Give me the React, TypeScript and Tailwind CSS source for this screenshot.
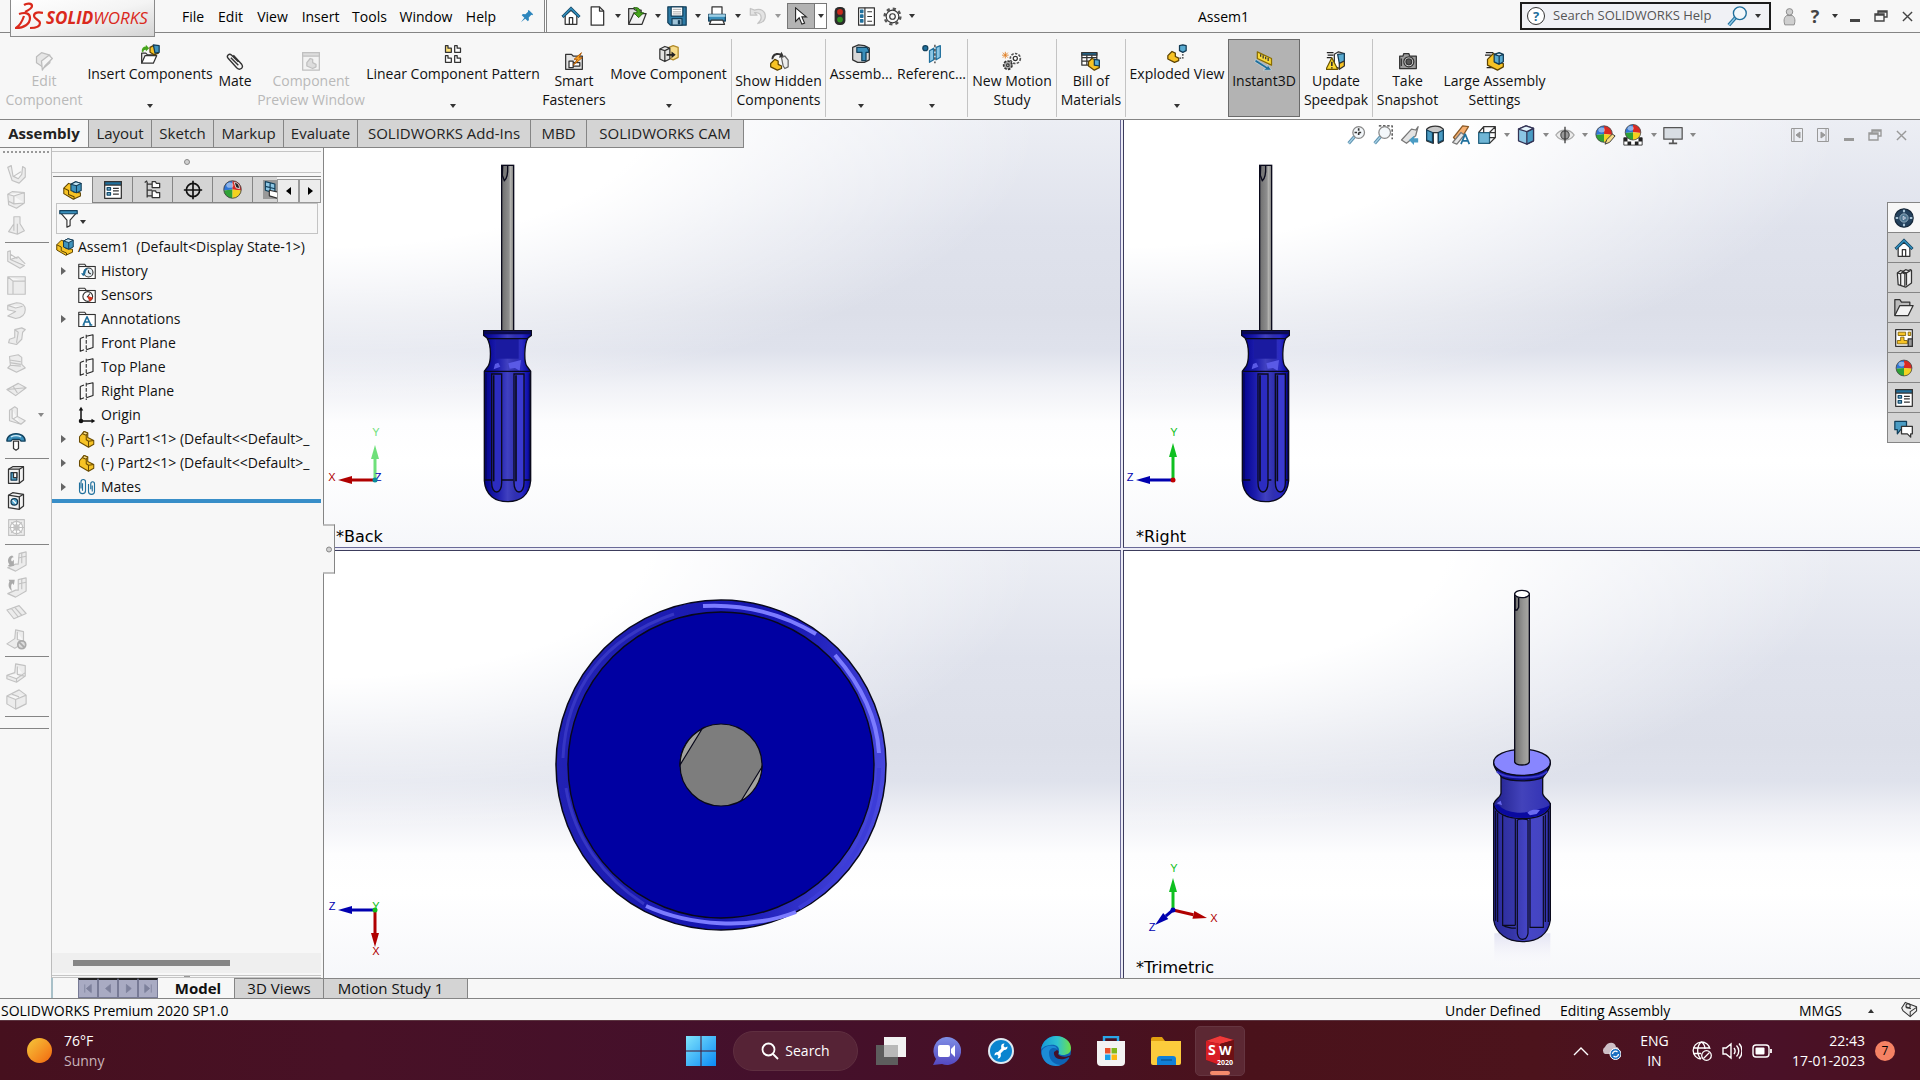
import React from "react";

type Kids = { children?: React.ReactNode };

const OUT = "#333";
const BLUE = "#1f6f9c";
const LBLUE = "#8cc6e4";
const YEL = "#f7c325";

function Svg({ children, size = "size-[20px]", box = "0 0 24 24" }: Kids & { size?: string; box?: string }) {
  return (
    <svg viewBox={box} className={"shrink-0 " + size} fill="none" stroke={OUT} strokeWidth="1.5" strokeLinejoin="round" aria-hidden="true">
      {children}
    </svg>
  );
}

/* ---------- shared glyph shapes ---------- */
const PartShape = () => (
  <g stroke="#6b4c00" strokeWidth="1.4">
    <path d="M2 9l6-7 5 2v6l8 4v5l-7 4L2 16z" fill={YEL} />
    <path d="M8 2l5 2-2 3-5-2z" fill="#fbe08a" />
    <path d="M11 7v6l3 2 7-1M14 15v8" />
  </g>
);
const AsmShape = () => (
  <g strokeWidth="1.3">
    <path d="M1 9l6-6 6 2v9l9 1v4l-9 4L1 16z" fill={YEL} stroke="#5d4300" />
    <path d="M1 9l6 3v5l7 3v3" stroke="#5d4300" />
    <path d="M10 4l6-3 7 2v9l-6 3-7-3z" fill="#3f93bd" stroke="#123b55" />
    <path d="M10 4l7 2 6-3-7-2z" fill="#c4e6f5" stroke="#123b55" />
    <path d="M17 6v9" stroke="#123b55" />
  </g>
);
const ListShape = () => (
  <g>
    <rect x="2" y="2" width="20" height="20" fill="#fff" />
    <rect x="2" y="2" width="20" height="4" fill={BLUE} />
    <path d="M5 9h4v3H5zM5 15h4v3H5z" fill={LBLUE} stroke="#124a6b" />
    <path d="M12 10h7M12 13h7M12 17h7" />
  </g>
);
const HouseShape = () => (
  <g>
    <path d="M5 11v11h14V11l-7-6z" fill="#fff" />
    <path d="M10 22v-8h4v8" />
    <path d="M1 12L12 1l11 11-2 2-9-9-9 9z" fill="#2c86b3" stroke="#103d5a" strokeWidth="1" />
  </g>
);
const BallShape = ({ x = 12, y = 12, r = 9 }: { x?: number; y?: number; r?: number }) => (
  <g stroke="none" transform={`translate(${x} ${y}) scale(${r / 10})`}>
    <path d="M0 0V-10A10 10 0 0 0-10 1z" fill="#3076d6" />
    <path d="M0 0V-10A10 10 0 0 1 10 1z" fill="#d92a23" />
    <path d="M0 0L-10 1A10 10 0 0 0 0 10z" fill="#2fa136" />
    <path d="M0 0L10 1A10 10 0 0 1 0 10z" fill="#f3d21f" />
    <ellipse cx="-3" cy="-5" rx="4" ry="3" fill="#fff" opacity=".45" />
    <circle r="10" fill="none" stroke="#444" strokeWidth="1" />
  </g>
);
const Magnify = ({ soft = false }: { soft?: boolean }) => (
  <g>
    <path d="M9 14l-7 8" stroke={soft ? "#5f93b0" : BLUE} strokeWidth="4" />
    <path d="M9 14l-7 8" stroke={soft ? "#a8d2e6" : "#8cc6e4"} strokeWidth="1.6" />
    <circle cx="14" cy="9" r="7" fill="#f3f7fa" stroke={soft ? "#888" : BLUE} />
  </g>
);

const Part = ({ size }: { size?: string }) => <Svg size={size}><PartShape /></Svg>;
const Asm = ({ size }: { size?: string }) => <Svg size={size}><AsmShape /></Svg>;
const ListIcon = ({ size }: { size?: string }) => <Svg size={size}><ListShape /></Svg>;
const House = ({ size }: { size?: string }) => <Svg size={size}><HouseShape /></Svg>;

const Down = ({ color = "text-[#333]" }: { color?: string }) => (
  <svg viewBox="0 0 6 4" className={"h-[4px] w-[6px] shrink-0 " + color} fill="currentColor" aria-hidden="true">
    <path d="M0 0h6L3 4z" />
  </svg>
);

/* ---------- title bar ---------- */
function Logo() {
  return (
    <div className="relative z-20 ml-[10px] flex h-[37px] w-[145px] items-center gap-[3px] self-start border border-t-0 border-[#8a8a8a] bg-gradient-to-br from-white via-[#f4f4f4] to-[#d4d4d4] pl-[4px]">
      <svg viewBox="0 0 28 28" className="mb-[4px] h-[28px] w-[28px] shrink-0" fill="none" stroke="#da291c" strokeWidth="2.2" aria-hidden="true">
        <path d="M9 3c3-2 8-2 8 1 0 2-3 4-7 6" />
        <path d="M4 12c6-2 11-1 11 4 0 6-6 10-14 10 3-2 6-6 8-12" />
        <path d="M28 11c-4-1-9-1-9 3 0 3 6 4 6 7 0 4-5 5-10 5" />
      </svg>
      <span className="font-['Open_Sans',sans-serif] text-[17px] leading-5 text-[#da291c] italic">
        <b>SOLID</b>WORKS
      </span>
    </div>
  );
}

const menus: [string, string][] = [
  ["File", "w-[38px]"], ["Edit", "w-[37px]"], ["View", "w-[47px]"], ["Insert", "w-[49px]"],
  ["Tools", "w-[49px]"], ["Window", "w-[64px]"], ["Help", "w-[46px]"],
];

function QuickTool({ label, arrow = true, muted = false, children }: Kids & { label: string; arrow?: boolean; muted?: boolean }) {
  return (
    <button aria-label={label} className={"flex h-[26px] items-center " + (arrow ? "w-[40px] gap-[8px]" : "w-[26px]")}>
      {children}
      {arrow && <Down color={muted ? "text-[#999]" : "text-[#333]"} />}
    </button>
  );
}

function TitleBar() {
  return (
    <header className="flex h-[33px] shrink-0 items-center border-b border-[#858585] bg-[#f7f7f7] text-[14px] text-black">
      <Logo />
      <nav className="ml-[19px] flex" aria-label="Main menu">
        {menus.map(([m, w]) => (
          <button key={m} className={w + " text-center"}>{m}</button>
        ))}
      </nav>
      <button aria-label="Pin menu" className="ml-[16px]">
        <svg viewBox="0 0 16 16" className="size-[14px]" fill="#2d86bd" aria-hidden="true">
          <path d="M10 1l5 5-1 1-1-.3-3 3 .2 3-1.2 1.2L6 11 1 15l4-5-3-3 1.200-1.200 3 .2 3-3L9 2z" />
        </svg>
      </button>
      <div className="ml-[10px] h-full w-[3px] border-x border-[#858585] bg-white" />
      <div className="ml-[14px] flex flex-1 items-center">
        <QuickTool label="Home" arrow={false}><House /></QuickTool>
        <QuickTool label="New"><Svg><path d="M5 1h10l5 5v17H5z" fill="#fff" /><path d="M15 1v5h5" /></Svg></QuickTool>
        <QuickTool label="Open">
          <Svg><path d="M2 22V3h6l2 2h7v4" fill="#ddd" /><path d="M2 22L8 9h15l-5 13z" fill="#f3f3f3" /><path d="M8 2c6-1 8 2 8 6h4l-6 6-6-6h4c0-3-1-5-4-6z" fill="#46a51c" stroke="#1f5d06" strokeWidth="1" /></Svg>
        </QuickTool>
        <QuickTool label="Save">
          <Svg><path d="M1 1h22v22H4l-3-3z" fill="#2c7ba6" stroke="#143f5a" /><rect x="5" y="1" width="14" height="11" fill="#fff" stroke="#143f5a" /><path d="M7 4h10M7 7h10M7 9.500h10" stroke="#999" strokeWidth="1" /><rect x="6" y="15" width="12" height="8" fill="#9fc4d8" stroke="#143f5a" /><rect x="13" y="17" width="3" height="5" fill="#143f5a" stroke="none" /></Svg>
        </QuickTool>
        <QuickTool label="Print">
          <Svg><path d="M6 10V1h12v9" fill="#fff" /><path d="M2 10h20v8H2z" fill="#3a8fbb" stroke="#143f5a" /><path d="M5 17h14l2 5H3z" fill="#fff" /><path d="M2 10h20v3H2z" fill="#9fd0e6" stroke="none" /></Svg>
        </QuickTool>
        <QuickTool label="Undo" muted>
          <Svg><path d="M4 3v8h8l-3-3c6-1 8 3 8 6s-2 5-4 7c6-1 9-4 9-9s-5-10-13-7z" fill="#e3e3e3" stroke="#c4c4c4" /></Svg>
        </QuickTool>
        <button aria-label="Select" className="flex h-[26px] w-[40px] items-center border border-[#777] bg-white">
          <span className="flex h-full w-[27px] items-center justify-center border-r border-[#777] bg-[#b3b3b3]">
            <svg viewBox="0 0 14 20" className="h-[18px] w-[14px]" aria-hidden="true"><path d="M1 1v15l4-4 3 7 3-1-3-7h5z" fill="#fff" stroke="#222" strokeWidth="1.200" /></svg>
          </span>
          <span className="flex flex-1 justify-center"><Down /></span>
        </button>
        <button aria-label="Rebuild" className="ml-[7px] w-[23px]">
          <svg viewBox="0 0 12 20" className="h-[18px] w-[12px]" aria-hidden="true"><rect width="12" height="20" rx="5" fill="#2b2b2b" /><circle cx="6" cy="5.500" r="3.200" fill="#c92a1c" /><circle cx="6" cy="14" r="3.200" fill="#2f8f24" /></svg>
        </button>
        <button aria-label="File properties" className="w-[26px]"><Svg size="size-[19px]"><rect x="2" y="1" width="20" height="22" fill="#fff" /><path d="M10 1v22" /><path d="M4.500 4h3v3h-3zM4.500 10h3v3h-3zM4.500 16h3v3h-3z" fill={BLUE} stroke={BLUE} /><path d="M13 6h6M13 12h6M13 18h6" /></Svg></button>
        <button aria-label="Options" className="flex items-center gap-[7px]">
          <Svg size="size-[19px]"><circle cx="12" cy="12" r="10" strokeDasharray="4 3.850" strokeWidth="3" stroke="#555" /><circle cx="12" cy="12" r="8" fill="#f7f7f7" strokeWidth="1.400" /><circle cx="12" cy="12" r="3.500" /></Svg>
          <Down />
        </button>
        <h1 className="ml-[283px] text-[14px]">Assem1</h1>
      </div>
      <div className="flex h-[28px] w-[251px] items-center border-2 border-[#1c1c1c] bg-[#f0f1f5] px-[5px]">
        <span className="flex size-[18px] shrink-0 items-center justify-center rounded-full border border-[#333] bg-white text-[13px] leading-none font-bold text-[#1f6f9c]">?</span>
        <input aria-label="Search SOLIDWORKS Help" placeholder="Search SOLIDWORKS Help" className="ml-[8px] w-[174px] min-w-0 bg-transparent text-[13px] outline-none placeholder:text-[#555]" />
        <Svg size="size-[22px]"><Magnify /></Svg>
        <span className="ml-[6px]"><Down /></span>
      </div>
      <div className="flex items-center text-[#444]">
        <button aria-label="Account" className="flex w-[36px] justify-center">
          <svg viewBox="0 0 14 20" className="h-[19px] w-[13px]" fill="#cfcfcf" stroke="#888" aria-hidden="true"><path d="M2 19c-2-6 0-9 2-10h6c2 1 4 4 2 10z" /><circle cx="7" cy="5" r="3.500" /></svg>
        </button>
        <button aria-label="Help" className="flex w-[35px] items-center justify-center gap-[13px] text-[18px] leading-none font-bold">?<Down /></button>
        <button aria-label="Minimize" className="flex w-[26px] justify-center pt-[8px]"><span className="h-[3px] w-[10px] bg-[#444]" /></button>
        <button aria-label="Restore" className="flex w-[26px] justify-center"><RestoreGlyph /></button>
        <button aria-label="Close" className="flex w-[26px] justify-center"><CloseGlyph /></button>
      </div>
    </header>
  );
}

const RestoreGlyph = () => (
  <svg viewBox="0 0 14 12" className="h-[12px] w-[14px]" fill="none" stroke="currentColor" strokeWidth="1.400" aria-hidden="true"><path d="M4 4V1h9v6h-3M1 4h9v7H1zM4 2h9M1 5h9" /></svg>
);
const CloseGlyph = () => (
  <svg viewBox="0 0 12 12" className="size-[11px]" fill="none" stroke="currentColor" strokeWidth="1.500" aria-hidden="true"><path d="M1 1l10 10M11 1L1 11" /></svg>
);

/* ---------- ribbon ---------- */
type RibbonItem = {
  lines: string[]; w: string; icon: React.ReactNode; drop?: boolean; sep?: boolean; off?: boolean; on?: boolean;
};

const ribbon: RibbonItem[] = [
  { lines: ["Edit", "Component"], w: "w-[88px]", off: true, icon: <Svg><g stroke="#bdbdbd"><path d="M3 7l6-5 10 3v9l-7 6-9-6z" fill="#e6e6e6" /><path d="M9 12l9-7 4 4-9 9-3 5z" fill="#f5f5f5" /></g></Svg> },
  { lines: ["Insert Components"], w: "w-[124px]", drop: true, icon: <Svg><path d="M2 23V11h5l2 2h9v3" fill="#eee" /><path d="M2 23l4-9h14l-4 9z" fill="#fff" /><path d="M2 9c0-4 2-6 5-6V1l4 4-4 4V7C5 7 4 8 4 10z" fill="#46a51c" stroke="none" /><path d="M12 4l4-2 6 2v7l-5 2-5-3z" fill={YEL} stroke="#5d4300" /><path d="M16 1l7 1v8l-5 1z" fill="#3f93bd" stroke="#123b55" /></Svg> },
  { lines: ["Mate"], w: "w-[46px]", icon: <Svg><path d="M16 13L8 5C5 2 1 6 4 9l10 11c4 4 9 0 6-4L10 5M16 17L7 8" strokeWidth="1.700" /></Svg> },
  { lines: ["Component", "Preview Window"], w: "w-[106px]", off: true, icon: <Svg><g stroke="#c0c0c0"><rect x="2" y="2" width="20" height="21" fill="#f3f3f3" /><path d="M2 2h20v4H2z" fill="#ddd" /><path d="M7 14l4-5 3 1v4l4 2v3l-4 2-7-3z" fill="#ddd" /></g></Svg> },
  { lines: ["Linear Component Pattern"], w: "w-[178px]", drop: true, icon: <Svg><path d="M3 2h3v3h4v5H3z" fill="#ffe27a" /><path d="M14 2h3v3h4v5h-7zM3 14h3v3h4v5H3zM14 14h3v3h4v5h-7z" fill="#fff" /></Svg> },
  { lines: ["Smart", "Fasteners"], w: "w-[64px]", icon: <Svg><path d="M2 22V4h7l2 2h11v16z" fill="#e5e5e5" /><path d="M6 12h5v8H6zM11 14h8v4h-8z" fill="#fff" /><path d="M21 2l-9 8h4l-5 7 11-9h-4z" fill="#f7a325" stroke="#a95200" strokeWidth="1" /></Svg> },
  { lines: ["Move Component"], w: "w-[126px]", drop: true, sep: true, icon: <Svg><path d="M12 4l5-2 6 2v12l-6 3-5-2z" fill="#f7dc8a" stroke="#b08a2a" /><path d="M1 6l6-3 6 2v13l-6 3-6-3zM1 6l6 2 6-3M7 8v13" fill="#e2e2e2" /><path d="M9 12h6V9l5 4-5 4v-3H9z" fill="#222" stroke="none" /></Svg> },
  { lines: ["Show Hidden", "Components"], w: "w-[94px]", sep: true, icon: <Svg><path d="M3 10c0-7 6-9 11-7l1-2 3 6-6 1 1-3C9 4 6 5 5 10z" fill="#333" stroke="none" /><path d="M2 15l5-5 4 2v4l4 2v3l-5 2-8-4z" fill={YEL} stroke="#5d4300" /><path d="M15 8l4-2 4 5v8l-4 2-2-3z" fill="#eee" stroke="#666" /></Svg> },
  { lines: ["Assemb..."], w: "w-[70px]", drop: true, icon: <Svg><path d="M2 4l7-3 7 1 6 3v14l-6 3H8l-6-3z" fill="#d8d8d8" /><path d="M7 4h12l2 3v3h-3v10h-5V10H7z" fill="#3a8fbb" stroke="#12405c" /></Svg> },
  { lines: ["Referenc..."], w: "w-[72px]", drop: true, sep: true, icon: <Svg><circle cx="4" cy="5" r="3" fill={BLUE} stroke="#12405c" /><path d="M9 8l5-3v14l-5 3zM17 4l5-2v14l-5 3z" fill={LBLUE} stroke={BLUE} /><path d="M15.500 1v22" strokeDasharray="3 2" /></Svg> },
  { lines: ["New Motion", "Study"], w: "w-[89px]", sep: true, icon: <Svg><circle cx="16" cy="9" r="6" fill="#fff" strokeDasharray="3 1.500" strokeWidth="2" stroke="#555" /><circle cx="16" cy="9" r="2.500" /><circle cx="7" cy="17" r="5" fill="#aaa" strokeDasharray="3 1.500" strokeWidth="2" /><circle cx="7" cy="17" r="1.500" fill="#fff" /><path d="M4 1v8M0 5h8M1 2l6 6M7 2L1 8" stroke="#e07b1c" strokeWidth="1" /></Svg> },
  { lines: ["Bill of", "Materials"], w: "w-[69px]", sep: true, icon: <Svg><path d="M1 2h18v15H1zM1 8h18M1 12h18M7 5v12M13 5v12" fill="#fff" /><path d="M1 2h18v3H1z" fill={BLUE} /><path d="M9 13l4-4 9 3v8l-6 3-7-5z" fill={YEL} stroke="#5d4300" /><path d="M16 10l6 1v7l-6-1z" fill="#59abd1" stroke="#123b55" /></Svg> },
  { lines: ["Exploded View"], w: "w-[102px]", drop: true, icon: <Svg><path d="M1 14l5-5 4 2v4l4 2v3l-5 2-8-4z" fill={YEL} stroke="#5d4300" /><path d="M15 2l4-1 4 1v6l-4 2-4-2z" fill="#59abd1" stroke="#123b55" /><path d="M19 12v5h-5" strokeDasharray="2 1.500" /></Svg> },
  { lines: ["Instant3D"], w: "w-[72px]", on: true, icon: <Svg><path d="M4 1l17 8v8L4 9z" fill="#f9d93b" stroke="#8a6d00" /><path d="M8 4v3M11 5v4M14 7v3M17 8v4" stroke="#333" /><path d="M2 10l14 9v-3l5 7H11l3-2L1 13z" fill={BLUE} stroke="#fff" strokeWidth=".5" /></Svg> },
  { lines: ["Update", "Speedpak"], w: "w-[73px]", sep: true, icon: <Svg><path d="M1 2h8M2 5h7M1 8h6" stroke="#222" /><path d="M10 4l5-3 7 2v14l-6 4-6-3z" fill="#fff" /><path d="M14 4l8-1v9l-6 3z" fill="#59abd1" stroke="#123b55" /><path d="M16 15l6-3v6l-6 4z" fill={YEL} /><path d="M7 8l7 14H0z" fill="#fbd92f" stroke="#6b5500" /><path d="M7 13v5M7 19.500V21" strokeWidth="2" /></Svg> },
  { lines: ["Take", "Snapshot"], w: "w-[69px]", icon: <Svg><path d="M2 6h4l1-3h6l1 3h8v15H2z" fill="#9b9b9b" /><circle cx="13" cy="13" r="6" fill="#e8e8e8" /><circle cx="13" cy="13" r="3.500" fill="#555" /><path d="M4 9v9" /></Svg> },
  { lines: ["Large Assembly", "Settings"], w: "w-[105px]", icon: <Svg><path d="M1 2h9M0 5h7M2 20h8" stroke="#222" /><path d="M3 10l7-7 4 2v9l8 1v4l-7 4-12-6z" fill={YEL} stroke="#5d4300" /><path d="M11 4l6-2 5 2v9l-5 3-6-3zM11 4l6 2 5-2M17 6v10" fill="#59abd1" stroke="#123b55" /></Svg> },
];

function Ribbon() {
  return (
    <div className="flex h-[87px] shrink-0 border-b border-[#858585] bg-[#f7f7f7] pt-[6px] pb-[2px] text-[14px]" role="toolbar" aria-label="Assembly commands">
      {ribbon.map((r) => (
        <button
          key={r.lines.join(" ")}
          className={
            "relative flex shrink-0 flex-col items-center leading-[19px] whitespace-nowrap " + r.w +
            (r.drop ? " pt-[5px]" : r.on ? " pt-[11px]" : " pt-[12px]") +
            (r.sep ? " border-r border-[#c4c4c4]" : "") +
            (r.off ? " text-[#b9b9b9]" : " text-[#111]") +
            (r.on ? " border border-[#6b6b6b] bg-[#b3b3b3]" : "")
          }
        >
          {r.icon}
          {r.lines.map((l) => <span key={l}>{l}</span>)}
          {r.drop && <span className="absolute bottom-[9px] left-1/2 -translate-x-1/2"><Down /></span>}
        </button>
      ))}
    </div>
  );
}

const tabs: [string, string][] = [
  ["Assembly", "w-[89px]"], ["Layout", "w-[63px]"], ["Sketch", "w-[62px]"], ["Markup", "w-[70px]"],
  ["Evaluate", "w-[74px]"], ["SOLIDWORKS Add-Ins", "w-[173px]"], ["MBD", "w-[56px]"], ["SOLIDWORKS CAM", "w-[157px]"],
];

function CommandTabs() {
  return (
    <div className="absolute top-0 left-0 z-10 flex h-[28px] border-b border-[#858585] text-[15px]" role="tablist">
      {tabs.map(([t, w], i) => (
        <button key={t} role="tab" aria-selected={i === 0} className={w + (i === 0 ? " bg-[#f7f7f7] font-bold" : " bg-[#d4d4d4]") + " border-r border-[#858585] whitespace-nowrap text-[#222]"}>
          {t}
        </button>
      ))}
    </div>
  );
}

/* ---------- left mate toolbar ---------- */
const Ghost = ({ children }: Kids) => (
  <svg viewBox="0 0 24 24" className="size-[21px]" fill="#ececec" stroke="#c2c2c2" strokeWidth="1.300" strokeLinejoin="round" aria-hidden="true">{children}</svg>
);

const sideGroups: [string, React.ReactNode][][] = [
  [
    ["Base flange", <Ghost><path d="M2 5l4-2 2 12 6 3 4-5 1-9 3 2v10l-7 7-8-3zM9 15l8-5" /></Ghost>],
    ["Edge flange", <Ghost><path d="M2 6l5-3 14 1v12l-9 6-9-4zM2 6l7 2 12-4M9 8v9l12-1M3 14l6 3" /></Ghost>],
    ["Loft", <Ghost><path d="M9 2h7v8l5 8-8 4-10-3 6-9zM9 2v16M13 10v12" /></Ghost>],
  ],
  [
    ["Miter flange", <Ghost><path d="M2 3l3-1v10l16 7-5 3L2 14zM5 12l9-3 8 8M5 6l8 5" /></Ghost>],
    ["Hem", <Ghost><path d="M2 2h20v20H2zM2 2l6 5h14M8 7v15" /></Ghost>],
    ["Jog", <Ghost><path d="M2 5l10-3c7 0 10 3 10 8s-4 9-11 10L2 17l9-5-9-2zM2 5l9 3 8-2" /></Ghost>],
    ["Sketched bend", <Ghost><path d="M10 3l8-2 4 2-3 3-1 8-6 6-9-2 1-4 6-2zM10 3l4 3-2 12" /></Ghost>],
    ["Cross break", <Ghost><path d="M4 4l10-2 4 3v8l4 4-10 5L2 17l3-3zM4 8l13 2M5 14l12 1M4 11l13 2" /></Ghost>],
    ["Corner", <Ghost><path d="M1 12l13-7 9 5-12 9zM1 12l22-2M8 8l5 8" /></Ghost>],
    ["Gusset", <Ghost><path d="M4 6l6-4 3 2v9l9 5-5 4-13-4zM7 5v10l10 7M13 13l-5 3" /></Ghost>],
    ["Forming tool", <Svg><path d="M1 12c0-6 6-9 11-9s11 3 11 9h-5l-2-2H8l-2 2z" fill="#3a8fbb" stroke="#12405c" /><path d="M6 7c4-2 8-2 12 0" stroke="#cfeaf6" /><path d="M9 12h6v9l-3 2-3-2z" fill="#fff" /></Svg>],
  ],
  [
    ["Extruded cut", <Svg><path d="M3 5l5-3h13v16l-5 4H3z" fill="#f3f3f3" /><path d="M3 5h13v17M16 5l5-3" /><path d="M6 9h7v9H6z" fill="#59abd1" stroke="#123b55" /><path d="M9 9h4v6H9z" fill="#fff" /></Svg>],
    ["Simple hole", <Svg><path d="M3 5l5-3 13 2v14l-5 4-13-2z" fill="#f3f3f3" /><path d="M3 5l13 2v15M16 7l5-3" /><circle cx="10" cy="13" r="4" fill="#59abd1" stroke="#123b55" /><path d="M8 11l4 4" stroke="#fff" /></Svg>],
    ["Vent", <Ghost><path d="M3 3h18v18H3z" /><circle cx="12" cy="12" r="7" fill="#fff" /><circle cx="12" cy="12" r="3" /><path d="M12 3v18M3 12h18M6 6l12 12M18 6L6 18" /></Ghost>],
  ],
  [
    ["Unfold", <Ghost><path d="M15 3l8-2v15l-12 7-9-4 9-4h3z" /><path d="M18 2v12M14 8l9-2" /><path d="M7 5c-5 1-6 7-3 10l-2 2h7v-7l-2 2c-2-2-1-5 2-5z" fill="#aaa" stroke="none" /></Ghost>],
    ["Fold", <Ghost><path d="M14 3l9-2v15l-12 7-9-4 9-4h3z" /><path d="M18 2v12M14 8l9-2" /><path d="M3 3l7 0-1 6-2-2c-2 3-1 6 0 9-4-3-5-7-3-11z" fill="#aaa" stroke="none" /></Ghost>],
    ["Flatten", <Ghost><path d="M1 8l14-5 8 9-14 6zM6 6l8 10M10 5l8 9" /></Ghost>],
    ["No bends", <Ghost><path d="M11 1l9 2v10l-3 5-7 4-9-5 9-6zM13 3v9l7 2" /><circle cx="18" cy="18" r="4.500" fill="#ddd" stroke="#aaa" strokeWidth="2" /><path d="M15 15l6 6" stroke="#aaa" strokeWidth="2" /></Ghost>],
  ],
  [
    ["Rip", <Ghost><path d="M11 1l11 2v12l-10 7-11-4v-4l9-3zM13 4v9l8 2M1 14l11 4 10-7M12 18v4" /></Ghost>],
    ["Insert bends", <Ghost><path d="M1 8l14-7 8 6v10l-12 6-10-6zM1 8l10 4 12-5M11 12v11M7 6l8 3" /></Ghost>],
  ],
];

function SideTools() {
  return (
    <aside className="flex w-[52px] shrink-0 flex-col border-r border-[#bcbcbc] bg-[#f7f7f7] pt-[3px]" aria-label="Sheet metal tools">
      <div className="mr-[2px] ml-[3px] h-[9px] border-t-2 border-dotted border-[#999]" />
      {sideGroups.map((g, i) => (
        <React.Fragment key={i}>
          {g.map(([label, icon]) => (
            <button key={label} aria-label={label} className="flex h-[26px] items-center justify-between pr-[7px] pl-[6px]">
              {icon}
              {label === "Gusset" && <Down color="text-[#888]" />}
            </button>
          ))}
          <div className="mr-[2px] ml-[5px] flex h-[8px] items-center"><div className="h-px flex-1 bg-[#858585]" /></div>
        </React.Fragment>
      ))}
      <div className="mt-[8px] mr-[2px] h-px bg-[#858585]" />
    </aside>
  );
}

/* ---------- feature tree ---------- */
const Folder = ({ children }: Kids) => (
  <Svg size="size-[18px]"><path d="M1 22V3h8l2 3h12v16z" fill="#fff" /><path d="M1 6h22" />{children}</Svg>
);
const Plane = () => (
  <Svg size="size-[18px]"><path d="M3 6l5-2M11 3l9-2v17l-9 3M8 21l-5 2V6" stroke="#222" /><path d="M11 1v23" strokeDasharray="5 2" /></Svg>
);
const Clip = () => (
  <Svg size="size-[18px]"><path d="M4 14V5c0-4 6-4 6 0v12c0 5-8 5-8 0V6M6 7v10M17 15V8c0-4 5-4 5 0v10c0 5-8 5-8 0V8M19 10v8" stroke={BLUE} /></Svg>
);

const tree: { text: string; icon: React.ReactNode; open?: boolean }[] = [
  { text: "History", open: true, icon: <Folder><circle cx="14" cy="14" r="6" fill="#e6f1f7" /><path d="M14 11v3l3 2" /><path d="M4 15l3 4 3-4c0-4 2-5 4-6-5-1-7 2-7 6z" fill={BLUE} stroke="none" /></Folder> },
  { text: "Sensors", icon: <Folder><circle cx="13" cy="14" r="6.500" fill="#fff" /><path d="M13 14l6 2-3 4z" fill="#d7351f" stroke="#d7351f" /><path d="M12 15l4-5" /></Folder> },
  { text: "Annotations", open: true, icon: <Folder><path d="M7 20l5-11 5 11M9 16h6M6 20h3M15 20h4" stroke={BLUE} strokeWidth="2.200" /></Folder> },
  { text: "Front Plane", icon: <Plane /> },
  { text: "Top Plane", icon: <Plane /> },
  { text: "Right Plane", icon: <Plane /> },
  { text: "Origin", icon: <Svg size="size-[18px]"><path d="M4 5v15h15" stroke="#111" strokeWidth="2" /><path d="M1 6l3-5 3 5zM18 17l5 3-5 3z" fill="#111" stroke="none" /><circle cx="4" cy="20" r="3" fill="#111" stroke="none" /></Svg> },
  { text: "(-) Part1<1> (Default<<Default>_", open: true, icon: <Part size="size-[18px]" /> },
  { text: "(-) Part2<1> (Default<<Default>_", open: true, icon: <Part size="size-[18px]" /> },
  { text: "Mates", open: true, icon: <Clip /> },
];

const panelTabs: [string, React.ReactNode][] = [
  ["Feature tree", <Asm size="size-[19px]" />],
  ["Property manager", <ListIcon size="size-[20px]" />],
  ["Configurations", <Svg size="size-[20px]"><path d="M5 2v19M5 5h6M5 12h6M5 19h6M2 3l3-2" /><path d="M11 2h4l1 2h4v5h-9zM11 13h4l1 2h4v6h-9z" fill="#fff" /></Svg>],
  ["DimXpert", <Svg size="size-[20px]"><circle cx="12" cy="12" r="8" stroke="#111" strokeWidth="2" /><path d="M12 1v22M1 12h22" stroke="#111" strokeWidth="2" /></Svg>],
  ["Display manager", <Svg size="size-[21px]"><BallShape r={10} /><path d="M14 4c4 0 6 3 6 7l-4-1z" fill="#222" stroke="#eee" strokeWidth="1" /></Svg>],
];

function FeaturePanel() {
  return (
    <section className="flex w-[272px] shrink-0 flex-col border-r border-[#858585] bg-[#f7f7f7] pt-[3px] pr-[2px]" aria-label="Feature manager">
      <div className="flex h-[22px] shrink-0 items-center justify-center border-y border-[#c4c4c4]">
        <span className="size-[6px] rounded-full border border-[#888] bg-[#d0d0d0]" />
      </div>
      <div className="mt-[3px] ml-[1px] flex h-[27px] shrink-0 border-t border-[#858585]">
        {panelTabs.map(([l, icon], i) => (
          <button key={l} aria-label={l} className={"flex w-[40px] items-center justify-center border-r border-[#858585] " + (i === 0 ? "bg-[#f7f7f7]" : "border-b bg-[#d4d4d4]")}>
            {icon}
          </button>
        ))}
        <button aria-label="CAM tree" className="flex w-[24px] shrink-0 items-center overflow-hidden border-b border-[#858585] bg-[#d4d4d4] pl-[10px]">
          <Svg size="size-[19px]"><rect x="0" y="0" width="24" height="24" fill="#999" stroke="none" /><path d="M3 2l12 3v12L3 13zM3 8l12 3M9 4v11" fill={LBLUE} stroke="#12405c" /><path d="M8 13l14 3v8l-14-4z" fill="#fff" /></Svg>
        </button>
        <button aria-label="Scroll tabs left" className="mt-[2px] flex flex-1 items-center justify-center border border-[#999] bg-[#ececec]"><span className="border-y-[4px] border-r-[5px] border-y-transparent border-r-black" /></button>
        <button aria-label="Scroll tabs right" className="mt-[2px] flex flex-1 items-center justify-center border border-[#999] bg-[#ececec]"><span className="border-y-[4px] border-l-[5px] border-y-transparent border-l-black" /></button>
      </div>
      <button aria-label="Filter" className="mr-[3px] ml-[4px] flex h-[31px] shrink-0 items-center gap-[2px] border border-[#c4c4c4] px-[2px]">
        <Svg size="size-[19px]"><path d="M2 5l8 9v9l4-2v-7l8-9" fill="#fff" /><path d="M1 2h22v4H1z" fill="#3a8fbb" stroke="#12405c" /></Svg>
        <span className="mt-[7px]"><Down /></span>
      </button>
      <div className="mt-px shrink-0 overflow-hidden text-[14px] leading-[24px] whitespace-pre text-[#111]" role="tree">
        <div role="treeitem" className="flex h-[24px] items-center gap-[4px] pl-[4px]"><Asm size="size-[18px]" />{"Assem1  (Default<Display State-1>)"}</div>
        {tree.map((t) => (
          <div key={t.text} role="treeitem" className="flex h-[24px] items-center pl-[9px]">
            <span className="w-[17px]">{t.open && <span className="block w-0 border-y-[4px] border-l-[5px] border-y-transparent border-l-[#666]" />}</span>
            {t.icon}
            <span className="ml-[5px]">{t.text}</span>
          </div>
        ))}
      </div>
      <div className="h-[4px] shrink-0 bg-[#388ec8]" />
      <div className="flex-1" />
      <div className="h-[20px] shrink-0 bg-[#efefef] pt-[7px] pl-[21px]"><div className="h-[6px] w-[157px] bg-[#868686]" /></div>
      <div className="mt-[2px] flex h-[3px] shrink-0 justify-center border-y border-[#c4c4c4]"><span className="w-[6px] bg-[#999]" /></div>
    </section>
  );
}

/* ---------- viewports ---------- */
const sceneBg =
  "bg-[radial-gradient(ellipse_90%_66%_at_0%_0%,#fff_0%,#fff_45%,rgba(255,255,255,0.5)_72%,rgba(255,255,255,0)_100%),linear-gradient(to_bottom,#eceef4_0%,#dfe2ec_25%,#dcdfe9_45%,#dfe2ec_54%,#f0f1f6_62%,#fdfdfe_71%,#fff_80%,#f6f7fa_100%)]";

function Viewport({ label, children }: Kids & { label?: string }) {
  return (
    <div className={"relative overflow-hidden " + sceneBg}>
      {children}
      {label && <span className="absolute bottom-0 left-[12px] font-['DejaVu_Sans',sans-serif] text-[16px] leading-[21px] text-black">{label}</span>}
    </div>
  );
}

function SideDriver({ id, groove }: { id: string; groove: [number, number] }) {
  const [a, b] = groove;
  return (
    <svg viewBox="0 0 420 1110" className="h-[370px] w-[140px]" fill="none" stroke="#0a0a1c" strokeWidth="4" aria-hidden="true">
      <defs>
        <linearGradient id={id + "s"}><stop offset="0" stopColor="#6e6e6e" /><stop offset=".6" stopColor="#8e8e8e" /><stop offset=".75" stopColor="#b5b5b2" /><stop offset="1" stopColor="#777" /></linearGradient>
        <linearGradient id={id + "h"}><stop offset="0" stopColor="#00008c" /><stop offset=".3" stopColor="#1e1eae" /><stop offset=".5" stopColor="#4040c0" /><stop offset=".66" stopColor="#3030b0" /><stop offset=".8" stopColor="#2a2ac4" /><stop offset="1" stopColor="#00009c" /></linearGradient>
      </defs>
      <rect x="185" y="46" width="36" height="496" fill={`url(#${id}s)`} />
      <path d="M188 48l-1 28 6 16c8-6 11-20 10-44" fill="#777" />
      <path d="M131 542h143v14l-10 8c-12 20-12 70-4 84l12 16v328c-4 44-32 63-69 63s-67-19-70-63V664l12-16c8-16 10-60-4-84l-10-8z" fill={`url(#${id}h)`} />
      <path d="M168 566h68v60h-68z" fill="#1a1aa0" stroke="none" />
      <path d="M165 642l10-4 6 12-20 8zM205 640l38-10-4 32-14-8-16 2z" fill="#5a5ae6" stroke="none" />
      <path d="M134 548h138" stroke="#0a0a50" strokeWidth="9" />
      <path d="M142 566h122M133 664h139" />
      <path d="M133 990h24M184 990h36M250 990h22" />
      <path d={`M${a} 672v326c0 16 6 28 15 28s15-12 15-28V672z`} fill="#2c2cc0" />
      <path d={`M${b} 672v326c0 16 6 28 15 28s15-12 15-28V672z`} fill="#3a3ad0" />
      <path d={`M${a + 6} 676v318M${b + 6} 676v318`} strokeWidth="5" />
      <path d="M138 670v318M268 670v318" strokeWidth="2" />
    </svg>
  );
}

function TrimetricDriver() {
  return (
    <svg viewBox="0 0 480 1200" className="h-[400px] w-[160px]" fill="none" stroke="#0a0a1c" strokeWidth="4" aria-hidden="true">
      <defs>
        <linearGradient id="ts"><stop offset="0" stopColor="#6c6c6c" /><stop offset=".6" stopColor="#979795" /><stop offset="1" stopColor="#aaa9a5" /></linearGradient>
        <linearGradient id="th"><stop offset="0" stopColor="#2a2a9c" /><stop offset=".35" stopColor="#3636a8" /><stop offset=".6" stopColor="#4646c8" /><stop offset=".85" stopColor="#4444c0" /><stop offset="1" stopColor="#2828a0" /></linearGradient>
        <linearGradient id="tn"><stop offset="0" stopColor="#20208c" /><stop offset=".5" stopColor="#4343bb" /><stop offset="1" stopColor="#3030b4" /></linearGradient>
        <linearGradient id="tr" x2="0" y2="1"><stop offset="0" stopColor="#dcdcf0" stopOpacity=".8" /><stop offset="1" stopColor="#fff" stopOpacity="0" /></linearGradient>
      </defs>
      <path d="M163 1090h168v110H163z" fill="url(#tr)" stroke="none" />
      <path d="M161 700v350c6 40 40 65 86 65s78-22 84-65V700c-20 50-150 60-170 0z" fill="url(#th)" />
      <path d="M183 620v50c-2 14-22 20-22 34 6 26 40 42 86 42s80-14 84-42c0-14-22-20-23-34v-50z" fill="url(#tn)" />
      <path d="M163 706c10 26 44 38 84 38s74-10 83-38c-26 14-54 12-60 18-30 10-76 0-88-14-8-8-12-6-19-4z" fill="#0a0aa0" stroke="none" />
      <path d="M262 728c8-8 24-12 38-8l-10 12-20 4zM170 700l12-8 4 14z" fill="#6a6af0" stroke="none" />
      <path d="M161 580c2 18 14 26 24 42 30 14 92 14 124 0 10-14 20-22 22-42z" fill="#10108c" />
      <path d="M170 604c24 24 128 26 152 0" stroke="#3a3ad0" strokeWidth="5" />
      <ellipse cx="246" cy="577" rx="85" ry="39" fill="#8886ff" />
      <path d="M224 72v504c4 12 40 12 44 0V72z" fill="url(#ts)" />
      <path d="M227 376v132" stroke="#555" strokeWidth="3" />
      <ellipse cx="246" cy="72" rx="22" ry="11" fill="#fff" />
      <path d="M225 82v38h6l5-8V84" />
      <path d="M167 722v330M188 736v330h38M226 746v320M232 750v340c4 24 28 24 32 0V750M270 746v326h40V738M316 734v322M325 722v334M173 728v328M232 750c8-4 24-4 32 0M188 1066c10 6 30 10 40 8" strokeWidth="3.500" />
    </svg>
  );
}

function TopView() {
  return (
    <svg viewBox="0 0 334 334" className="size-[334px]" fill="none" stroke="#08081a" aria-hidden="true">
      <defs>
        <linearGradient id="rim" x1="0" y1=".4" x2="1" y2=".6"><stop offset="0" stopColor="#2222b4" /><stop offset=".6" stopColor="#1414b0" /><stop offset="1" stopColor="#4a4ae0" /></linearGradient>
      </defs>
      <circle cx="167" cy="167" r="165" fill="url(#rim)" strokeWidth="1.500" />
      <g strokeWidth="4" stroke="#7c7cff">
        <path d="M149 8C185 6 225 14 262 36" />
        <path d="M281 57c28 32 42 66 44 98" />
        <path d="M92 308c44 20 104 24 150 6" />
      </g>
      <path d="M325 170c-2 60-32 112-80 140" stroke="#3c3cd8" strokeWidth="4" />
      <path d="M9 160C12 90 50 40 120 16M12 190c8 50 38 90 78 116" stroke="#3636c4" strokeWidth="3" />
      <circle cx="167" cy="167" r="153" fill="#0000a2" strokeWidth="1.400" />
      <circle cx="167" cy="167" r="41" fill="#7d7d7d" strokeWidth="1.200" />
      <path d="M148 131L126 167a41 41 0 0 1 22-36zM208 169l-21 34a41 41 0 0 0 21-34z" fill="#a3a39f" strokeWidth="1.200" />
    </svg>
  );
}

type Axis = { to: [number, number]; color: string; name: string; at: [number, number] };

function Triad({ axes, dot }: { axes: Axis[]; dot: string }) {
  return (
    <svg viewBox="-60 -60 120 120" className="size-[120px]" aria-hidden="true">
      {axes.map(({ to: [x, y], color, name, at }) => {
        const len = Math.hypot(x, y) || 1;
        const ux = x / len, uy = y / len;
        const bx = x - ux * 14, by = y - uy * 14;
        return (
          <g key={name} stroke={color} fill={color}>
            {len > 1 && <path d={`M0 0L${bx} ${by}`} strokeWidth="3" />}
            {len > 1 && <path d={`M${x} ${y}L${bx - uy * 4} ${by + ux * 4}L${bx + uy * 4} ${by - ux * 4}Z`} stroke="none" />}
            <text x={at[0]} y={at[1]} stroke="none" fontSize="11" textAnchor="middle" dominantBaseline="central" fontFamily="Liberation Sans, sans-serif">{name}</text>
          </g>
        );
      })}
      <circle r="2.500" fill={dot} />
    </svg>
  );
}

const R = "#b00000", G = "#0fc020", B = "#0000b0";

function Viewports() {
  return (
    <div className="grid min-w-0 flex-1 grid-cols-2 grid-rows-2 gap-[2px] bg-[#ececf6]">
      <div className="grid border-r border-b border-[#6a6a98]">
        <Viewport label="*Back">
          <div className="absolute top-[30px] left-[116px]"><SideDriver id="b" groove={[155, 222]} /></div>
          <div className="absolute bottom-[7px] left-[-9px]"><Triad dot="#0a8a9a" axes={[{ to: [-37, 0], color: R, name: "X", at: [-43, -3] }, { to: [0, -35], color: "#6fe07a", name: "Y", at: [1, -48] }, { to: [0, 0], color: B, name: "Z", at: [3, -3] }]} /></div>
        </Viewport>
      </div>
      <div className="grid border-b border-l border-[#3c3c5c] border-b-[#6a6a98]">
        <Viewport label="*Right">
          <div className="absolute top-[30px] left-[74px]"><SideDriver id="r" groove={[180, 232]} /></div>
          <div className="absolute bottom-[7px] left-[-11px]"><Triad dot="#c00000" axes={[{ to: [-37, 0], color: B, name: "Z", at: [-43, -3] }, { to: [0, -37], color: G, name: "Y", at: [1, -48] }]} /></div>
        </Viewport>
      </div>
      <div className="grid border-t border-r border-[#3c3c5c] border-r-[#6a6a98]">
        <Viewport>
          <div className="absolute top-[47px] left-[230px]"><TopView /></div>
          <div className="absolute bottom-[8px] left-[-9px]"><Triad dot="#0fc020" axes={[{ to: [-37, 0], color: B, name: "Z", at: [-43, -4] }, { to: [0, 37], color: R, name: "X", at: [1, 41] }, { to: [0, 0], color: G, name: "Y", at: [1, -4] }]} /></div>
        </Viewport>
      </div>
      <div className="grid border-t border-l border-[#3c3c5c]">
        <Viewport label="*Trimetric">
          <div className="absolute top-[19px] left-[316px]"><TrimetricDriver /></div>
          <div className="absolute bottom-[8px] left-[-11px]"><Triad dot="#0000b0" axes={[{ to: [0, -32], color: G, name: "Y", at: [1, -42] }, { to: [34, 8], color: R, name: "X", at: [41, 8] }, { to: [-18, 15], color: B, name: "Z", at: [-21, 17] }]} /></div>
        </Viewport>
      </div>
    </div>
  );
}

const viewTools: { label: string; icon: React.ReactNode; drop?: boolean }[] = [
  { label: "Zoom to fit", icon: <Svg><Magnify soft /><path d="M14 4v10M9 9h10" strokeDasharray="3 2" strokeWidth="2" /></Svg> },
  { label: "Zoom to area", icon: <Svg><path d="M7 1h16v16" strokeDasharray="3 2" /><Magnify soft /></Svg> },
  { label: "Previous view", icon: <Svg><path d="M3 18L15 5l5 1 3-4-2 7-1 4L9 22z" fill="#e3e3e3" stroke="#777" /><path d="M12 18l6-5v3h5v5h-5v3z" fill="#4a9cc4" stroke="none" /></Svg> },
  { label: "Section view", icon: <Svg><path d="M2 5c5-5 16-5 20 0v14l-6 3V9h-6v13l-8-3z" fill="#c9c9c9" /><path d="M2 6l7 3v12l-7-3zM16 9l6-3v12l-6 3z" fill="#4a9cc4" stroke="#12405c" /></Svg> },
  { label: "Dynamic annotation", icon: <Svg><path d="M3 15L14 1l7 1-5 8-9 9z" fill="#f7b070" stroke="#8a5a28" /><path d="M2 21l10-12 4 3-9 11z" fill="#e6e6e6" stroke="#777" /><path d="M12 23l5-12 5 12M14 19h6" stroke={BLUE} strokeWidth="2" /></Svg> },
  { label: "View orientation", drop: true, icon: <Svg><path d="M2 9h13v13H2z" fill="#6fb6d6" stroke="#22617f" /><path d="M2 9l6-7h14v13l-7 7M15 9l7-7M8 2v7M15 9h7M15 15h7" /></Svg> },
  { label: "Display style", drop: true, icon: <Svg><path d="M3 5l9-4 9 3v15l-8 4-10-4z" fill="#8cc6e4" stroke="#335" /><path d="M13 8l8-4v15l-8 4z" fill="#4a9cc4" stroke="#335" /><path d="M3 5l10 3 8-4-9-3z" fill="#e4f4fb" stroke="#335" /></Svg> },
  { label: "Hide/show items", drop: true, icon: <Svg><path d="M1 12c5-8 17-8 22 0-5 8-17 8-22 0z" fill="#ececec" stroke="#aaa" /><circle cx="12" cy="12" r="5" fill="#999" stroke="#555" /><path d="M12 2v20" /></Svg> },
  { label: "Edit appearance", icon: <Svg size="size-[22px]"><BallShape x={11} y={11} r={9} /><path d="M12 22l2-5 6-6 3 2-6 7z" fill="#f7dc8a" strokeWidth="1" /></Svg> },
  { label: "Apply scene", drop: true, icon: <Svg size="size-[22px]"><path d="M2 15h20v8H2z" fill="#fff" strokeWidth="1" /><path d="M2 15h4v4H2zM18 15h4v4h-4zM6 19h4v4H6zM14 19h4v4h-4z" fill="#222" stroke="none" /><BallShape x={12} y={9} r={8.500} /></Svg> },
  { label: "View settings", drop: true, icon: <Svg><rect x="1" y="3" width="22" height="14" fill="#d8dde3" stroke="#555" /><path d="M12 17v4M7 22h10" strokeWidth="2" stroke="#555" /></Svg> },
];

function HeadsUp() {
  return (
    <div className="absolute top-[4px] right-[6px] z-10 flex h-[22px] items-center">
      <div className="mr-[88px] flex items-center gap-[6px]" role="toolbar" aria-label="View tools">
        {viewTools.map((t) => (
          <button key={t.label} aria-label={t.label} className="flex items-center gap-[7px]">
            {t.icon}
            {t.drop && <Down color="text-[#888]" />}
          </button>
        ))}
      </div>
      <div className="flex text-[#999]">
        <button aria-label="Previous window" className="flex w-[26px] justify-center"><svg viewBox="0 0 12 14" className="h-[14px] w-[12px]" fill="none" stroke="currentColor" aria-hidden="true"><path d="M.5.5h11v13H.500zM3 .5v13" /><path d="M9 4v6L5 7z" fill="currentColor" /></svg></button>
        <button aria-label="Next window" className="flex w-[26px] justify-center"><svg viewBox="0 0 12 14" className="h-[14px] w-[12px]" fill="none" stroke="currentColor" aria-hidden="true"><path d="M.5.5h11v13H.500zM9 .5v13" /><path d="M4 4v6l4-3z" fill="currentColor" /></svg></button>
        <button aria-label="Minimize document" className="flex w-[26px] items-center justify-center pt-[8px]"><span className="h-[3px] w-[10px] bg-[#999]" /></button>
        <button aria-label="Restore document" className="flex w-[26px] items-center justify-center"><RestoreGlyph /></button>
        <button aria-label="Close document" className="flex w-[26px] items-center justify-center"><CloseGlyph /></button>
      </div>
    </div>
  );
}

const paneTabs: [string, React.ReactNode][] = [
  ["3DEXPERIENCE", <Svg><circle cx="12" cy="12" r="11" fill="#24425e" stroke="#16283a" /><circle cx="12" cy="12" r="5" fill="#4d7590" stroke="#9fb6c6" strokeWidth="1" /><path d="M12 2v3M12 19v3M2 12h3M19 12h3" stroke="#a9c4d6" strokeWidth="2.500" /><path d="M11 10l3 2-3 2z" stroke="#dde" strokeWidth="1" /></Svg>],
  ["Resources", <House />],
  ["Design library", <Svg><path d="M4 6l4-3 3 1 3-2 3 1 3-1 1 1v15l-7 5-9-3z" fill="#f0f0f0" /><path d="M4 6l4 1v14M9 5l4 2v15M13 7l7-4M8 7l4-3M10 4l5 2v15" /></Svg>],
  ["File explorer", <Svg><path d="M1 21V2h6l2 3h10v4" fill="#bbb" /><path d="M1 21L7 9h16l-6 12z" fill="#f3f3f3" /></Svg>],
  ["View palette", <Svg><path d="M2 2h20v20H2z" fill="#fff" /><path d="M5 5h9v4H5zM17 5h3v4h-3zM8 11h4v4h4v4H4v-4h4z" fill={YEL} stroke="#7a5d00" strokeWidth="1" /><path d="M17 13h5v9h-5z" fill="#999" /></Svg>],
  ["Appearances", <Svg><BallShape r={9.500} /></Svg>],
  ["Custom properties", <ListIcon />],
  ["Forum", <Svg><path d="M1 4h14v10H8l-4 5v-5H1z" fill="#4a9cc4" stroke="#12405c" /><path d="M9 10h13v9h-2v4l-4-4H9z" fill="#fff" /></Svg>],
];

function TaskPane() {
  return (
    <div className="absolute top-[82px] right-0 z-10 flex w-[33px] flex-col border-t border-l border-[#858585]">
      {paneTabs.map(([l, icon], i) => (
        <button key={l} aria-label={l} className={"flex h-[30px] items-center justify-center border-b border-[#858585] " + (i === 0 ? "bg-[#f7f7f7]" : "bg-[#d4d4d4]")}>
          {icon}
        </button>
      ))}
    </div>
  );
}

/* ---------- bottom bars ---------- */
function ModelTabs() {
  const arrows = [
    ["First", "M4 3v10M12 3v10L6 8z"], ["Previous", "M11 3v10L5 8z"], ["Next", "M6 3v10l6-5z"], ["Last", "M4 3v10l6-5zM12 3v10"],
  ];
  return (
    <div className="flex h-[21px] shrink-0 border-b border-[#858585] bg-[#f7f7f7] text-[15px] leading-none text-[#111]">
      <div className="ml-[51px] w-[27px] border-l-2 border-[#a8c0c8]" />
      {arrows.map(([l, d]) => (
        <button key={l} aria-label={l} className="flex w-[20px] items-center justify-center border border-t-2 border-[#777a95] border-t-[#222] bg-[#a9abc3]">
          <svg viewBox="0 0 16 16" className="h-[13px] w-[14px]" fill="#7d809b" stroke="#7d809b" aria-hidden="true"><path d={d} /></svg>
        </button>
      ))}
      <button className="w-[77px] border-r border-[#858585] pl-[4px] font-bold">Model</button>
      <button className="w-[89px] border-t border-r border-[#858585] bg-[#d4d4d4]">3D Views</button>
      <button className="w-[144px] border-t border-r border-[#858585] bg-[#d4d4d4] pr-[10px]">Motion Study 1</button>
      <div className="flex-1 border-t border-[#858585]" />
    </div>
  );
}

function StatusBar() {
  return (
    <footer className="flex h-[21px] shrink-0 items-center bg-[#f7f7f7] pt-[3px] pr-[2px] text-[14px] leading-[18px] text-black">
      <span className="flex-1 pl-[1px]">SOLIDWORKS Premium 2020 SP1.0</span>
      <span className="w-[115px]">Under Defined</span>
      <span className="w-[239px]">Editing Assembly</span>
      <button className="flex items-center">
        <span className="w-[69px] text-left">MMGS</span>
        <span className="rotate-180"><Down /></span>
      </button>
      <span className="ml-[27px] pb-[3px]"><Svg size="size-[17px]"><path d="M1 10l5-8 16 6v6l-9 8L3 14z" fill="#eee" /><path d="M7 8l7 3M13 21V15l9-6" /><circle cx="10" cy="7" r="3" /></Svg></span>
    </footer>
  );
}

function Taskbar() {
  return (
    <div className="flex h-[60px] shrink-0 items-center border-t border-[#5c3540] bg-[linear-gradient(to_right,#46101e_0%,#481126_18%,#44102c_40%,#461027_50%,#4a121b_65%,#4c131c_80%,#4a1128_92%,#4a111f_100%)] text-[14px] text-white">
      <button className="flex flex-1 items-center gap-[12px] pl-[27px] text-left leading-[20px]">
        <span className="size-[25px] rounded-full bg-gradient-to-br from-[#f3c73a] to-[#f0640c]" />
        <span className="flex flex-col"><span>76°F</span><span className="text-[#c9b4bb]">Sunny</span></span>
      </button>
      <div className="flex items-center pl-[9px]">
        <button aria-label="Start" className="mr-[17px]">
          <svg viewBox="0 0 30 30" className="size-[30px]" aria-hidden="true">
            <defs><linearGradient id="win" x2="1" y2="1"><stop offset="0" stopColor="#7fe4fb" /><stop offset="1" stopColor="#0a8af5" /></linearGradient></defs>
            <path d="M0 0h14.500v14.500H0zM15.500 0H30v14.500H15.500zM0 15.500h14.500V30H0zM15.500 15.500H30V30H15.500z" fill="url(#win)" />
          </svg>
        </button>
        <button className="flex h-[40px] w-[125px] items-center justify-center gap-[6px] rounded-full border border-[#5f2f40] bg-[#562336]">
          <svg viewBox="0 0 18 18" className="size-[18px]" fill="none" stroke="#fff" strokeWidth="1.800" aria-hidden="true"><circle cx="7.500" cy="7.500" r="6" /><path d="M12 12l5 5" /></svg>
          Search
        </button>
        <button aria-label="Task view" className="ml-[5px] flex w-[55px] justify-center">
          <svg viewBox="0 0 30 28" className="h-[28px] w-[30px]" aria-hidden="true"><rect x="0" y="8" width="22" height="20" fill="#5d5d5d" /><rect x="8" width="22" height="20" fill="#f2f2f2" /><rect x="8" y="8" width="14" height="12" fill="#b8b8b8" /></svg>
        </button>
        <button aria-label="Chat" className="flex w-[55px] justify-center">
          <svg viewBox="0 0 30 30" className="size-[30px]" aria-hidden="true">
            <defs><linearGradient id="chat" x2="0" y2="1"><stop offset="0" stopColor="#7f8fe6" /><stop offset="1" stopColor="#5448c0" /></linearGradient></defs>
            <path d="M15 1a14 14 0 1 1-4 27l-9 1 3-6A14 14 0 0 1 15 1z" fill="url(#chat)" /><rect x="7" y="9" width="12" height="12" rx="2" fill="#fff" /><path d="M20 13l4-4v12l-4-4z" fill="#fff" />
          </svg>
        </button>
        <button aria-label="Support assistant" className="flex w-[55px] justify-center">
          <svg viewBox="0 0 26 26" className="size-[26px]" aria-hidden="true"><circle cx="13" cy="13" r="12" fill="#0a84cf" stroke="#dfeaf2" strokeWidth="2" /><path d="M10 16l6-6" stroke="#fff" strokeWidth="3" /><path d="M19.500 8.500a3.200 3.200 0 1 1-3-3l-1 2.500 1.500 1.500z" fill="#fff" /><path d="M6.500 17.500a3.200 3.200 0 1 1 3 3l1-2.500-1.500-1.500z" fill="#fff" /></svg>
        </button>
        <button aria-label="Edge" className="flex w-[55px] justify-center">
          <svg viewBox="0 0 30 30" className="size-[30px]" aria-hidden="true">
            <defs><linearGradient id="edge" x2="1"><stop offset="0" stopColor="#1597d8" /><stop offset=".55" stopColor="#2ec2d0" /><stop offset="1" stopColor="#6be04a" /></linearGradient></defs>
            <circle cx="15" cy="15" r="15" fill="#0d63b5" />
            <path d="M0 14C1 5 8 0 15 0c9 0 15 6 15 12 0 5-4 7-8 7-3 0-5-1-4-3 1-6-4-8-9-7-5 0-9 4-9 5z" fill="url(#edge)" />
            <path d="M8 17c0 8 6 12 12 12-5 2-13 1-17-5-4-7-3-12 4-14 5-1 9 0 9 3-3-2-8-1-8 4z" fill="#1c8bd6" />
            <path d="M13 16c-1 6 6 10 15 5l2 3v6-11c-5 3-11 2-13-1 1-2 1-3-1-4z" fill="#45112a" />
          </svg>
        </button>
        <button aria-label="Store" className="flex w-[55px] justify-center">
          <svg viewBox="0 0 30 30" className="size-[30px]" aria-hidden="true"><path d="M8 6V1h14v5" fill="none" stroke="#2aa6e8" strokeWidth="2.400" /><path d="M1 5h28v21q0 4-4 4H5q-4 0-4-4z" fill="#f3f3f3" /><path d="M9 12h5.500v5.500H9z" fill="#e9512c" /><path d="M15.500 12H21v5.500h-5.500z" fill="#80b81a" /><path d="M9 18.500h5.500V24H9z" fill="#18a0ea" /><path d="M15.500 18.500H21V24h-5.500z" fill="#fcb912" /></svg>
        </button>
        <button aria-label="File Explorer" className="flex w-[55px] justify-center">
          <svg viewBox="0 0 30 28" className="h-[28px] w-[30px]" aria-hidden="true"><path d="M0 2q0-2 2-2h9l3 4H0z" fill="#e0a010" /><path d="M0 4h30v22q0 2-2 2H2q-2 0-2-2z" fill="#fccb3c" /><path d="M6 28v-6q0-3 3-3h13q3 0 3 3v6z" fill="#1080d8" /><path d="M10 23h11" stroke="#0a5a9c" strokeWidth="1.500" /></svg>
        </button>
        <button aria-label="SOLIDWORKS 2020" className="relative ml-[2px] flex h-[50px] w-[50px] items-center justify-center rounded-[5px] border border-[#653540] bg-[#5c2833]">
          <svg viewBox="0 0 30 30" className="size-[30px]" aria-hidden="true"><path d="M1 5l14-5 14 4v21l-14 4L1 24z" fill="#5a0a10" /><path d="M1 5l14 3v21L1 24z" fill="#d81e24" /><path d="M1 5l14-5 14 4-14 4z" fill="#f03a3a" /><path d="M15 8l14-4v21l-14 4z" fill="#6e1014" /><text x="3" y="19" fontSize="14" fontWeight="700" fill="#fff" fontFamily="Open Sans, sans-serif">S</text><text x="14" y="19" fontSize="13" fontWeight="700" fill="#fff" fontFamily="Open Sans, sans-serif">W</text><text x="12" y="29" fontSize="7" fontWeight="700" fill="#fff" fontFamily="Open Sans, sans-serif">2020</text></svg>
          <span className="absolute bottom-0 h-[4px] w-[20px] rounded-full bg-[#f58a6c]" />
        </button>
      </div>
      <div className="flex flex-1 items-center justify-end pr-[25px]">
        <button aria-label="Show hidden icons" className="mr-[12px]"><svg viewBox="0 0 16 10" className="h-[10px] w-[16px]" fill="none" stroke="#fff" strokeWidth="1.400" aria-hidden="true"><path d="M1 9l7-7 7 7" /></svg></button>
        <button aria-label="OneDrive"><svg viewBox="0 0 20 18" className="h-[18px] w-[20px]" aria-hidden="true"><path d="M4 12a4 4 0 0 1 0-7c2-5 10-6 11 0 4 0 4 6 1 7z" fill="#cdbfc6" /><circle cx="14.500" cy="12" r="5.500" fill="#1a6fc0" stroke="#fff" /><path d="M11.500 12a3 3 0 0 1 5-2M17.500 12a3 3 0 0 1-5 2" fill="none" stroke="#fff" strokeWidth="1.300" /></svg></button>
        <button className="mr-[4px] w-[67px] text-center leading-[20px]">ENG<br />IN</button>
        <button aria-label="Network, volume and battery" className="flex items-center gap-[10px] pr-[20px]">
          <svg viewBox="0 0 20 20" className="size-[20px]" fill="none" stroke="#fff" strokeWidth="1.300" aria-hidden="true"><path d="M9 18A8.500 8.500 0 1 1 18 8M1 7h16M1 12.500h8M9 18c-5-5-4-14 .5-17 2 1.500 3.500 4 3.500 7" /><circle cx="14.500" cy="14.500" r="4.800" /><path d="M11.500 17.500l6-6" /></svg>
          <svg viewBox="0 0 20 18" className="h-[18px] w-[20px]" fill="none" stroke="#fff" strokeWidth="1.400" aria-hidden="true"><path d="M1 6h3l5-4v14l-5-4H1zM12 6c1.500 2 1.500 4 0 6M14.500 3.500c3 3 3 8 0 11M17 1.500c4 4 4 11 0 15" /></svg>
          <svg viewBox="0 0 20 14" className="h-[14px] w-[20px]" fill="none" stroke="#fff" strokeWidth="1.400" aria-hidden="true"><rect x="1" y="1" width="16" height="12" rx="3" /><rect x="3.500" y="3.500" width="9" height="7" rx="1" fill="#fff" stroke="none" /><path d="M19 5v4" strokeWidth="1.800" /></svg>
        </button>
        <button className="text-right leading-[20px]">22:43<br />17-01-2023</button>
        <button aria-label="7 notifications" className="ml-[10px] flex size-[20px] items-center justify-center rounded-full bg-[#f58264] text-[12px] leading-none text-black">7</button>
      </div>
    </div>
  );
}

export default function App() {
  return (
    <div className="flex h-screen flex-col overflow-hidden bg-[#f7f7f7] font-['Open_Sans','Noto_Sans',sans-serif]">
      <TitleBar />
      <Ribbon />
      <main className="relative flex min-h-0 flex-1">
        <CommandTabs />
        <div className="flex shrink-0 pt-[28px]">
          <SideTools />
          <FeaturePanel />
        </div>
        <div className="relative flex min-w-0 flex-1">
          <Viewports />
          <button aria-label="Collapse panel" className="absolute top-1/2 left-[-1px] flex h-[49px] w-[12px] -translate-y-1/2 items-center justify-center border border-l-0 border-[#858585] bg-[#f7f7f7]">
            <span className="size-[6px] rounded-full border border-[#888] bg-[#d0d0d0]" />
          </button>
          <HeadsUp />
          <TaskPane />
        </div>
      </main>
      <ModelTabs />
      <StatusBar />
      <Taskbar />
    </div>
  );
}
